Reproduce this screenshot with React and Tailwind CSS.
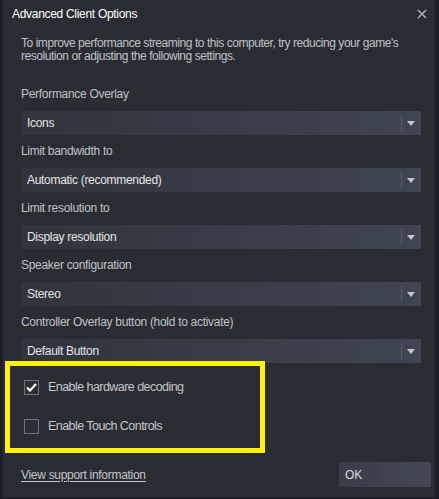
import React from "react";

function Dropdown({ value }) {
  return (
    <div className="relative flex h-[24px] w-[400px] items-center bg-gradient-to-r from-[#30343c] to-[#3f4552]">
      <span className="pl-[6px] text-[12px] tracking-[-0.3px] text-[#e4e6e8]">{value}</span>
      <div className="absolute left-[380px] top-[4px] h-[16px] w-px bg-[#565c69]" />
      <svg className="absolute left-[386px] top-[10px]" width="8" height="5" viewBox="0 0 8 5">
        <path d="M0 0 H8 L4 5 Z" fill="#c4c6c9" />
      </svg>
    </div>
  );
}

function Group({ label, value }) {
  return (
    <div className="flex flex-col">
      <div className="h-[16px] whitespace-nowrap text-[12px] leading-[16px] tracking-[-0.3px] text-[#bfc3c8]">{label}</div>
      <div className="mt-[9px] mb-[8px]">
        <Dropdown value={value} />
      </div>
    </div>
  );
}

function Checkbox({ checked, label }) {
  return (
    <div className="flex h-[15px] items-center">
      <div className="flex h-[15px] w-[15px] items-center justify-center border border-[#6e7279] bg-[#2b2e35]">
        {checked && (
          <svg width="11" height="9" viewBox="0 0 11 9">
            <path d="M1 4.5 L4 7.5 L10 1" stroke="#ffffff" strokeWidth="2.2" fill="none" />
          </svg>
        )}
      </div>
      <span className="ml-[9px] whitespace-nowrap text-[12.5px] tracking-[-0.55px] text-[#c3c7cc]">{label}</span>
    </div>
  );
}

export default function App() {
  return (
    <div
      className="relative flex h-[499px] w-[439px] bg-[#1c1f25] pl-[3px]"
      style={{ fontFamily: '"Liberation Sans", Arial, sans-serif' }}
    >
      <div className="flex h-[497px] w-[432px] flex-col bg-[#292c33]">
        <div className="flex h-[27px] items-center justify-between pl-[9px] pr-[8px]">
          <span className="text-[12px] tracking-[-0.3px] text-[#ffffff]">Advanced Client Options</span>
          <svg width="10" height="10" viewBox="0 0 10 10">
            <path d="M1 1 L9 9 M9 1 L1 9" stroke="#b8b9bb" strokeWidth="1.4" />
          </svg>
        </div>
        <div className="flex flex-col px-[18px]">
          <p className="mt-[10px] whitespace-nowrap text-[12px] leading-[13px] tracking-[-0.45px] text-[#bfc3c8]">
            To improve performance streaming to this computer, try reducing your game's
            <br />
            resolution or adjusting the following settings.
          </p>
          <div className="mt-[23px] flex flex-col">
            <Group label="Performance Overlay" value="Icons" />
            <Group label="Limit bandwidth to" value="Automatic (recommended)" />
            <Group label="Limit resolution to" value="Display resolution" />
            <Group label="Speaker configuration" value="Stereo" />
            <Group label="Controller Overlay button (hold to activate)" value="Default Button" />
          </div>
          <div className="mt-[9px] flex flex-col gap-[24px] pl-[3px]">
            <Checkbox checked label="Enable hardware decoding" />
            <Checkbox label="Enable Touch Controls" />
          </div>
          <div className="mt-[28px] flex items-center justify-between">
            <span className="whitespace-nowrap text-[12px] tracking-[-0.3px] text-[#c3c7cc] underline underline-offset-2">
              View support information
            </span>
            <div className="mr-[-14px] flex h-[25px] w-[92px] items-center bg-gradient-to-r from-[#383d47] to-[#424856] pl-[6px] text-[12px] text-[#d6dbe2]">
              OK
            </div>
          </div>
        </div>
      </div>
      <div className="pointer-events-none absolute left-[5px] top-[361px] h-[92px] w-[260px] border-[5px] border-[#fff200]" />
    </div>
  );
}
